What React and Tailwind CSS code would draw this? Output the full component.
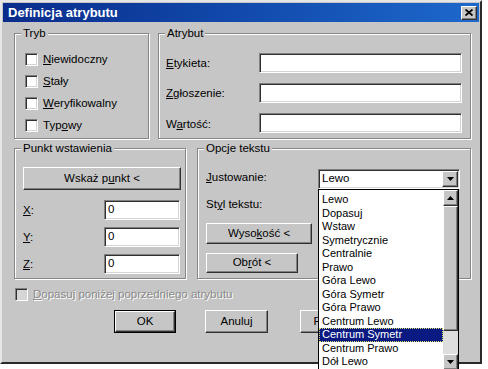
import React from "react";

const sunken =
  "border border-t-[#808080] border-l-[#808080] border-b-white border-r-white shadow-[inset_1px_1px_0_#303030,inset_-1px_-1px_0_#d4d4d4]";
const raised =
  "border border-t-white border-l-white border-b-[#303030] border-r-[#303030] shadow-[inset_-1px_-1px_0_#808080] bg-[#c6c6c6]";

const U = ({ children }) => <span className="underline underline-offset-[1px]">{children}</span>;

const Group = ({ title, className, children }) => (
  <div className={`relative border border-[#868686] shadow-[1px_1px_0_#fff,inset_1px_1px_0_#fff] ${className}`}>
    <span className="absolute -top-[8px] left-[6px] bg-[#c6c6c6] px-[2px] leading-[14px]">{title}</span>
    {children}
  </div>
);

const Check = ({ label }) => (
  <div className="flex items-center gap-[5px] h-[13px]">
    <div className={`w-[13px] h-[13px] bg-white ${sunken}`} />
    <span className="leading-[13px]">{label}</span>
  </div>
);

const Field = ({ className }) => <div className={`h-[20px] bg-white ${sunken} ${className}`} />;

const Btn = ({ className, children }) => (
  <div className={`flex items-center justify-center ${raised} ${className}`}>{children}</div>
);

const Arrow = ({ up }) => (
  <svg width="7" height="4" viewBox="0 0 7 4">
    <path d={up ? "M3.5 0L7 4H0Z" : "M0 0H7L3.5 4Z"} fill="#000" />
  </svg>
);

const items = [
  "Lewo",
  "Dopasuj",
  "Wstaw",
  "Symetrycznie",
  "Centralnie",
  "Prawo",
  "Góra Lewo",
  "Góra Symetr",
  "Góra Prawo",
  "Centrum Lewo",
  "Centrum Symetr",
  "Centrum Prawo",
  "Dół Lewo",
];

export default function App() {
  return (
    <div className="relative w-[488px] h-[369px] overflow-hidden bg-white font-['Liberation_Sans',Arial,sans-serif] text-[11.5px] text-black">
      <div className="w-[482px] h-[364px] border-2 border-t-[#e6e6e6] border-l-[#e6e6e6] border-r-[#2a2a2a] border-b-[#2a2a2a] bg-[#c6c6c6] p-px flex flex-col">
        <div className="h-[19px] flex items-center justify-between bg-linear-to-r from-[#0a2c8c] to-[#1e68cc] pl-[5px] pr-[2px]">
          <span className="font-bold text-[13px] text-white leading-none">Definicja atrybutu</span>
          <div className={`w-[16px] h-[14px] flex items-center justify-center ${raised}`}>
            <svg width="8" height="7" viewBox="0 0 8 7">
              <path d="M0.5 0.5L7.5 6.5M7.5 0.5L0.5 6.5" stroke="#000" strokeWidth="1.8" />
            </svg>
          </div>
        </div>

        <div className="flex flex-col pl-[11px]">
          <div className="mt-[11px] flex gap-[9px]">
            <Group title="Tryb" className="w-[135px] h-[106px]">
              <div className="flex flex-col gap-[9px] pt-[19px] pl-[10px]">
                <Check label={<><U>N</U>iewidoczny</>} />
                <Check label={<><U>S</U>tały</>} />
                <Check label={<><U>W</U>eryfikowalny</>} />
                <Check label={<>Typ<U>o</U>wy</>} />
              </div>
            </Group>
            <Group title="Atrybut" className="w-[313px] h-[106px]">
              <div className="flex flex-col gap-[10px] pt-[19px]">
                <div className="flex items-center h-[20px]">
                  <span className="w-[100px] pl-[7px] pt-[2px]"><U>E</U>tykieta:</span>
                  <Field className="w-[203px]" />
                </div>
                <div className="flex items-center h-[20px]">
                  <span className="w-[100px] pl-[7px] pt-[2px]"><U>Z</U>głoszenie:</span>
                  <Field className="w-[203px]" />
                </div>
                <div className="flex items-center h-[20px]">
                  <span className="w-[100px] pl-[7px] pt-[3px]">W<U>a</U>rtość:</span>
                  <Field className="w-[203px]" />
                </div>
              </div>
            </Group>
          </div>

          <div className="mt-[9px] flex gap-[11px]">
            <Group title="Punkt wstawienia" className="w-[172px] h-[131px]">
              <div className="flex flex-col pt-[18px] pl-[8px]">
                <Btn className="w-[158px] h-[23px]">Wskaż p<U>u</U>nkt &lt;</Btn>
                <div className="flex flex-col gap-[7px] mt-[10px]">
                  {["X", "Y", "Z"].map((l) => (
                    <div key={l} className="flex items-center h-[20px]">
                      <span className="w-[81px] pt-[2px]"><U>{l}</U>:</span>
                      <div className={`w-[76px] h-[20px] bg-white pl-[3px] flex items-center ${sunken}`}>0</div>
                    </div>
                  ))}
                </div>
              </div>
            </Group>
            <Group title="Opcje tekstu" className="w-[274px] h-[131px]">
              <div className="flex flex-col items-start pt-[20px] pl-[8px]">
                <div className="flex items-center h-[20px]">
                  <span className="w-[112px] pb-[2px]"><U>J</U>ustowanie:</span>
                  <div className={`relative w-[142px] h-[20px] bg-white flex items-center justify-between pl-[3px] pr-[1px] ${sunken}`}>
                    <span>Lewo</span>
                    <div className={`w-[16px] h-[16px] flex items-center justify-center ${raised}`}>
                      <Arrow />
                    </div>
                    <div className="absolute -left-px top-[19px] z-10 w-[141px] h-[182px] bg-white border border-black flex">
                      <div className="flex-1 flex flex-col pt-[3px] text-[11px]">
                        {items.map((it) => (
                          <div
                            key={it}
                            className={`h-[13.5px] leading-[13.5px] pl-[3px] ${
                              it === "Centrum Symetr"
                                ? "bg-[#0a1a82] text-white outline-1 outline-dotted outline-[#e0e060] -outline-offset-1"
                                : ""
                            }`}
                          >
                            {it}
                          </div>
                        ))}
                      </div>
                      <div className="w-[15px] flex flex-col bg-[#dedede]">
                        <div className={`h-[16px] flex items-center justify-center ${raised}`}>
                          <Arrow up />
                        </div>
                        <div className={`h-[125px] ${raised}`} />
                        <div className="flex-1" />
                        <div className={`h-[16px] flex items-center justify-center ${raised}`}>
                          <Arrow />
                        </div>
                      </div>
                    </div>
                  </div>
                </div>
                <div className="mt-[6px] h-[20px] flex items-center">
                  <span>St<U>y</U>l tekstu:</span>
                </div>
                <Btn className="mt-[8px] w-[106px] h-[21px]">Wyso<U>k</U>ość &lt;</Btn>
                <Btn className="mt-[9px] w-[92px] h-[20px]">Ob<U>r</U>ót &lt;</Btn>
              </div>
            </Group>
          </div>

          <div className="mt-[9px] flex items-center gap-[5px] pl-[1px] h-[13px]">
            <div className={`w-[13px] h-[13px] bg-[#d6d6d6] ${sunken}`} />
            <span className="text-[#8a8a8a] [text-shadow:1px_1px_0_#fff]">
              <U>D</U>opasuj poniżej poprzedniego atrybutu
            </span>
          </div>

          <div className="mt-[9px] flex">
            <div className="ml-[100px] w-[62px] h-[23px] border border-black">
              <Btn className="w-full h-full">OK</Btn>
            </div>
            <Btn className="ml-[29px] w-[63px] h-[23px]">Anuluj</Btn>
            <Btn className="ml-[32px] w-[63px] h-[23px]">Pomoc</Btn>
          </div>
        </div>
      </div>
    </div>
  );
}
